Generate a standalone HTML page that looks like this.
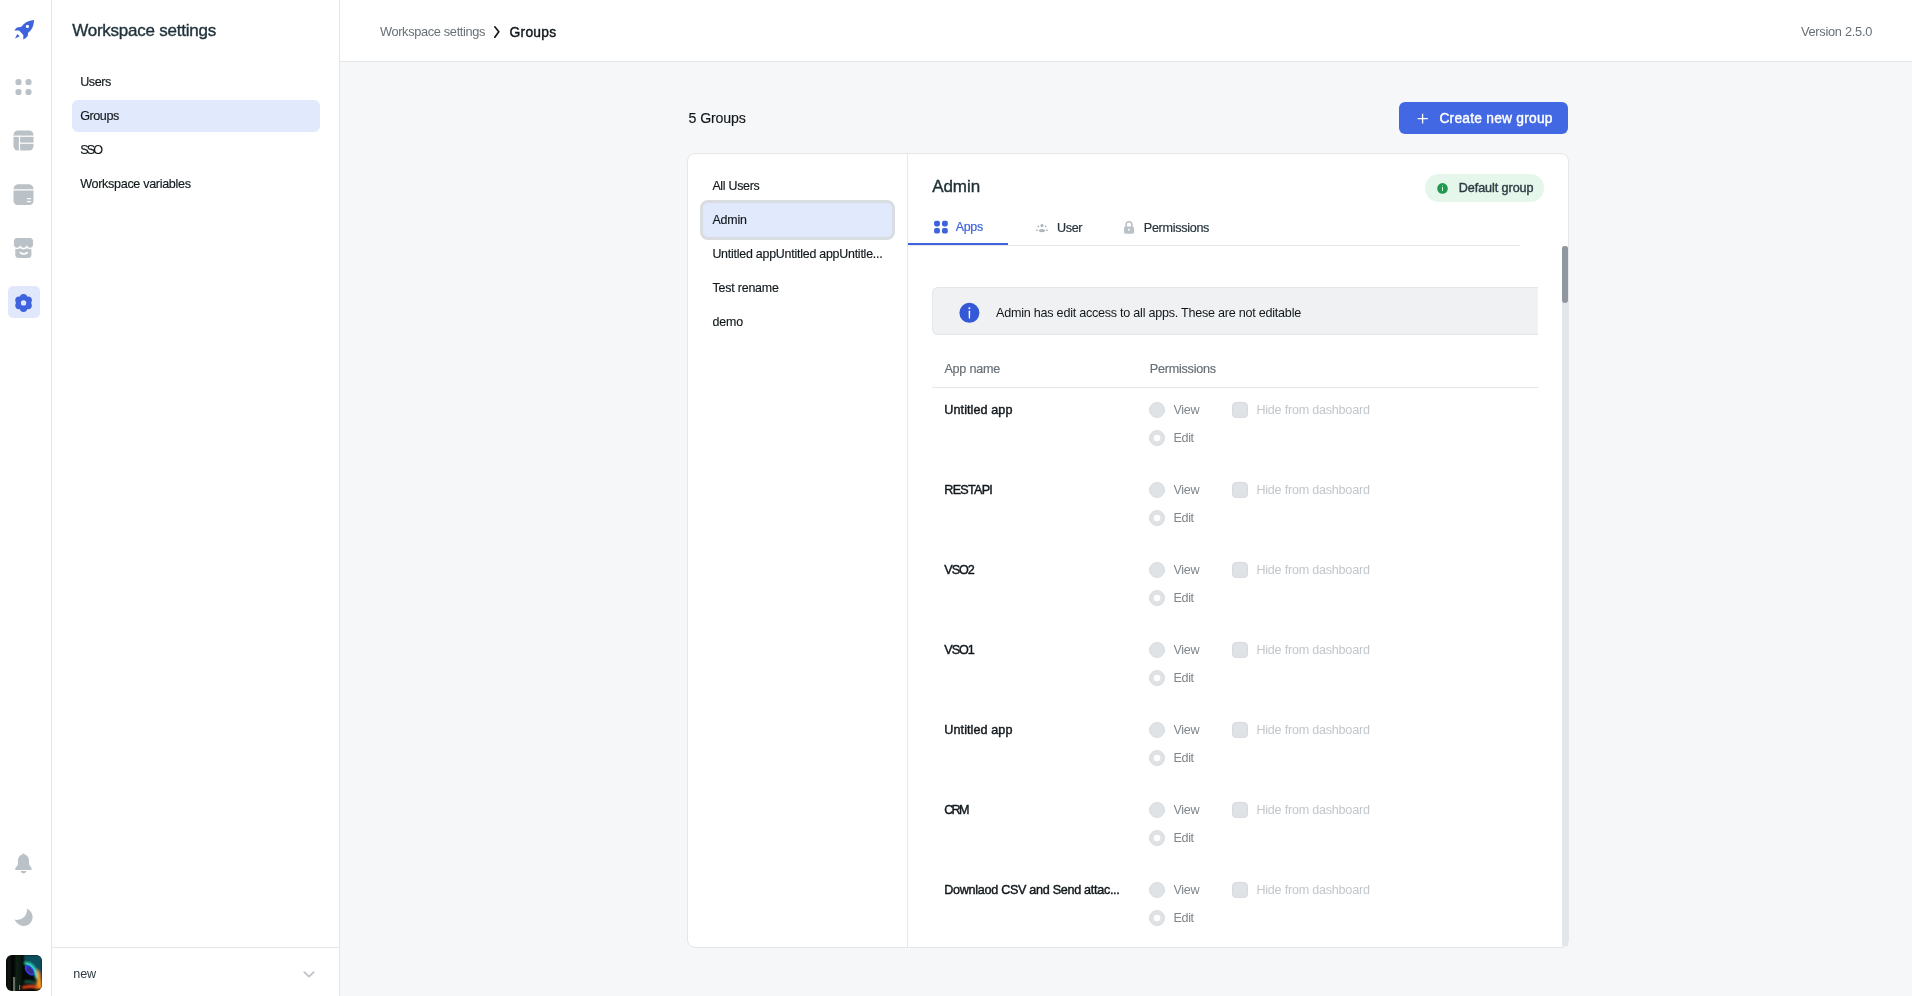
<!DOCTYPE html>
<html><head><meta charset="utf-8">
<style>
*{box-sizing:border-box;margin:0;padding:0}
html,body{width:1912px;height:996px;overflow:hidden;background:#f6f7f9;font-family:"Liberation Sans",sans-serif;color:#11181c}
.a{position:absolute}
#ov{position:absolute;left:0;top:0;width:1912px;height:996px;font-family:"Liberation Sans",sans-serif;will-change:transform}
</style></head><body>
<!-- rail -->
<div class="a" style="left:0;top:0;width:51px;height:996px;background:#fff"></div>
<div class="a" style="left:51px;top:0;width:1px;height:996px;background:#e4e7ea"></div>
<!-- side -->
<div class="a" style="left:52px;top:0;width:287px;height:996px;background:#fff"></div>
<div class="a" style="left:339px;top:0;width:1px;height:996px;background:#e4e7ea"></div>
<div class="a" style="left:52px;top:947px;width:287px;height:1px;background:#e4e7ea"></div>
<div class="a" style="left:72px;top:100px;width:248px;height:32px;background:#e1e9fc;border-radius:6px"></div>
<!-- header -->
<div class="a" style="left:340px;top:0;width:1572px;height:61px;background:#fff"></div>
<div class="a" style="left:340px;top:61px;width:1572px;height:1px;background:#e4e7ea"></div>
<!-- button -->
<div class="a" style="left:1399px;top:102px;width:169px;height:32px;background:#4368e3;border-radius:6px"></div>
<!-- card -->
<div class="a" style="left:687px;top:153px;width:882px;height:795px;background:#fff;border:1px solid #e4e7ea;border-radius:8px"></div>
<div class="a" style="left:907px;top:154px;width:1px;height:793px;background:#e6e8eb"></div>
<!-- selected group -->
<div class="a" style="left:700px;top:200px;width:195px;height:40px;border:3.5px solid #d9dde1;background:#e1e9fc;border-radius:8px"></div>
<!-- default group pill -->
<div class="a" style="left:1425px;top:174px;width:119px;height:28px;background:#e5f6ea;border-radius:14px"></div>
<!-- tabs -->
<div class="a" style="left:908px;top:245px;width:612px;height:1px;background:#e4e7ea"></div>
<div class="a" style="left:908px;top:243px;width:100px;height:2px;background:#3e63dd"></div>
<!-- banner -->
<div class="a" style="left:932px;top:287px;width:606px;height:48px;background:#f0f1f3;border:1px solid #e4e7ea;border-radius:6px 0 0 6px;border-right:none"></div>
<!-- table header line -->
<div class="a" style="left:932px;top:387px;width:606px;height:1px;background:#e4e7ea"></div>
<!-- scrollbar -->
<div class="a" style="left:1562px;top:246px;width:6px;height:700px;background:#e4e7ea"></div>
<div class="a" style="left:1562px;top:246px;width:6px;height:57px;background:#8f969d;border-radius:3px"></div>
<!-- avatar -->
<svg class="a" style="left:6px;top:955px" width="36" height="36" viewBox="0 0 36 36">
<defs><clipPath id="avc"><rect width="36" height="36" rx="6"/></clipPath>
<filter id="bl" x="-20%" y="-20%" width="140%" height="140%"><feGaussianBlur stdDeviation="0.9"/></filter>
<filter id="bl2" x="-20%" y="-20%" width="140%" height="140%"><feGaussianBlur stdDeviation="0.5"/></filter></defs>
<g clip-path="url(#avc)">
<rect width="36" height="36" fill="#060807"/>
<g filter="url(#bl)">
<rect x="10" y="0" width="2" height="36" fill="#1c3a26" opacity="0.8"/>
<rect x="13.5" y="0" width="1.5" height="30" fill="#163a22" opacity="0.7"/>
<rect x="2" y="0" width="2" height="36" fill="#1a221c" opacity="0.8"/>
<path d="M18,0 L36,0 L36,22 C33,18 30,14 27,10 C24,7 21,5 18,6 Z" fill="#0f5668" opacity="0.9"/>
<path d="M18,7 C23,6 29,10 31,17 C32,21 31,24 30,25 C29,20 26,13 18,9 Z" fill="#2fe0c8"/>
<path d="M30,14 C34,16 36,22 36,34 L29,34 C31,28 32,22 30,14 Z" fill="#f09a20"/>
<path d="M16,31.5 C21,30 27,29.5 32,31 L33,33.5 C27,32.5 21,33 16,34 Z" fill="#e84a1a"/>
<path d="M18,26 C22,25 26,26 30,27 L29,29 C25,28 21,27.5 18,28 Z" fill="#1a8a6a" opacity="0.8"/>
</g>
<g filter="url(#bl2)">
<ellipse cx="23.5" cy="15.3" rx="6.2" ry="3.6" transform="rotate(50 23.5 15.3)" fill="#2a40e8"/>
<ellipse cx="23.7" cy="15.3" rx="4.3" ry="2.2" transform="rotate(50 23.7 15.3)" fill="#3a2a8a"/>
<rect x="7" y="22" width="2.2" height="14" fill="#a8aca0" opacity="0.6"/>
<rect x="13" y="30" width="1.2" height="5" fill="#d0e0e0" opacity="0.5"/>
</g>
</g>
</svg>
<svg class="a" style="left:0;top:0" width="1912" height="996" viewBox="0 0 1912 996">
<!-- rocket -->
<path fill="#3e63dd" fill-rule="evenodd" d="M34,20.1 C30.2,20.3 26.4,21.8 23.6,24.3 L21,26.9 C19.4,26.9 17.8,27.1 16.7,27.7 C15.8,28.3 15,29.3 14.4,30.5 L19.1,30.6 L23.3,34.9 L23.3,39.4 C24.6,38.9 26.2,37.8 27.2,36.7 C27.9,35.7 28.1,34.2 28,32.9 L30.8,30.2 C33,27.4 34,24 34,20.1 Z M27.4,24.9 A1.5,1.5 0 1 0 27.41,24.9 Z"/>
<circle cx="27.4" cy="26.4" r="1.45" fill="#fff"/>
<path fill="#3e63dd" d="M15.1,38.6 L17.3,34 L19.7,36.3 Z"/>
<!-- apps dots -->
<g fill="#bac1c7"><rect x="15.5" y="79" width="6" height="6" rx="2.6"/><rect x="25.5" y="79" width="6" height="6" rx="2.6"/><rect x="15.5" y="89" width="6" height="6" rx="2.6"/><rect x="25.5" y="89" width="6" height="6" rx="2.6"/></g>
<!-- table -->
<rect x="13.5" y="130.5" width="20" height="20" rx="4.5" fill="#bac1c7"/>
<rect x="13" y="135.6" width="21" height="1.2" fill="#fff"/>
<rect x="18.9" y="135.6" width="1.2" height="16" fill="#fff"/>
<rect x="18.9" y="142.6" width="15" height="1.2" fill="#fff"/>
<!-- database -->
<path fill="#bac1c7" d="M13.5,189.3 C13.5,186.5 15.5,184.3 18.5,184.3 L28.5,184.3 C31.5,184.3 33.5,186.5 33.5,189.3 Z"/>
<path fill="#bac1c7" d="M13.5,190.5 L33.5,190.5 L33.5,201 C33.5,203.2 31.7,205 29.5,205 L17.5,205 C15.3,205 13.5,203.2 13.5,201 Z"/>
<rect x="27" y="198" width="4" height="1.2" fill="#fff"/>
<rect x="27" y="201" width="4" height="1.2" fill="#fff"/>
<!-- marketplace -->
<path fill="#bac1c7" d="M17,237.9 L30,237.9 C31.8,237.9 33.1,239.3 33.1,241 L33.1,244.6 C33.1,246.5 31.8,247.8 30.2,247.8 C28.6,247.8 27.1,246.6 26.8,245 C26.5,246.6 25.1,247.8 23.5,247.8 C21.9,247.8 20.5,246.6 20.2,245 C19.9,246.6 18.4,247.8 16.8,247.8 C15.2,247.8 13.9,246.5 13.9,244.6 L13.9,241 C13.9,239.3 15.2,237.9 17,237.9 Z"/>
<path fill="#bac1c7" d="M15.3,249 C16.2,249.2 17.8,249.3 18.7,248.8 C19.5,248.4 20.1,248.3 20.3,248.3 C21,249.1 22.3,249.4 23.5,249.4 C24.7,249.4 26,249.1 26.7,248.3 C27.1,248.4 27.6,248.5 28.3,248.8 C29.2,249.3 30.6,249.2 31.4,249 L31.4,254.9 C31.4,256.6 30,257.9 28.3,257.9 L18.4,257.9 C16.7,257.9 15.3,256.6 15.3,254.9 Z"/>
<path fill="none" stroke="#fff" stroke-width="1.8" stroke-linecap="round" d="M20.4,252.6 C22.5,254.3 25,254.3 27.2,252.6"/>
<!-- gear box -->
<rect x="8" y="286" width="32" height="32" rx="5" fill="#e1e8fb"/>
<g transform="translate(23.55,302.9)" fill="#3e63dd"><circle r="6.2"/><circle cx="0.00" cy="5.30" r="3.7"/><circle cx="-4.59" cy="2.65" r="3.7"/><circle cx="-4.59" cy="-2.65" r="3.7"/><circle cx="-0.00" cy="-5.30" r="3.7"/><circle cx="4.59" cy="-2.65" r="3.7"/><circle cx="4.59" cy="2.65" r="3.7"/><circle r="2.7" fill="#e1e8fb"/></g>
<!-- bell -->
<path fill="#bac1c7" d="M23.5,853.5 C24.2,853.5 24.6,854 24.7,854.6 C27.4,855.3 29,857.8 29,860.6 L29,864.5 L31.6,868.2 L31.6,869.9 L15.3,869.9 L15.3,868.2 L17.9,864.5 L17.9,860.6 C17.9,857.8 19.6,855.3 22.3,854.6 C22.4,854 22.8,853.5 23.5,853.5 Z"/>
<path fill="#bac1c7" d="M20.6,871.1 L26.4,871.1 C26,872.6 24.9,873.6 23.5,873.6 C22.1,873.6 21,872.6 20.6,871.1 Z"/>
<!-- moon -->
<path fill="#bac1c7" d="M26.4,908.8 C30,909.8 32.6,913.1 32.6,917 C32.6,921.9 28.7,926 23.8,926 C19.6,926 16.2,923.2 14.5,919.6 C15.4,919.8 16.3,919.9 17.2,919.9 C22.6,919.9 27,915.5 27,910.1 C27,909.7 26.8,909.2 26.4,908.8 Z"/>
<!-- breadcrumb chevron -->
<path fill="none" stroke="#11181c" stroke-width="1.7" stroke-linecap="round" stroke-linejoin="round" d="M494.8,26.8 L498.8,31.8 L494.8,37.2"/>
<!-- bottom chevron -->
<path fill="none" stroke="#c2c6ca" stroke-width="1.9" stroke-linecap="round" stroke-linejoin="round" d="M304.4,972.2 L309,976.6 L313.6,972.2"/>
<!-- plus -->
<path stroke="#fff" stroke-width="1.3" d="M1422.6,113.8 L1422.6,123.4 M1417.6,118.6 L1427.8,118.6"/>
<!-- default group icon -->
<circle cx="1442.5" cy="188.4" r="5.3" fill="#1f9a4e"/>
<rect x="1442.05" y="187" width="0.9" height="4" fill="#fff"/>
<rect x="1442.05" y="185.3" width="0.9" height="0.9" fill="#fff" opacity="0.7"/>
<!-- apps tab icon -->
<g fill="#3e63dd"><rect x="934.1" y="220.8" width="5.8" height="5.6" rx="1.8"/><rect x="942" y="220.8" width="5.8" height="5.6" rx="1.8"/><rect x="934.1" y="228" width="5.8" height="5.6" rx="1.8"/><rect x="942" y="228" width="5.8" height="5.6" rx="1.8"/></g>
<!-- user tab icon -->
<g fill="#aeb5bb">
<circle cx="1042" cy="225.6" r="1.6"/><circle cx="1038.3" cy="226.4" r="0.9"/><circle cx="1045.7" cy="226.4" r="0.9"/>
<ellipse cx="1042" cy="230.6" rx="3" ry="1.6"/><ellipse cx="1037" cy="230.2" rx="1.2" ry="0.8"/><ellipse cx="1047" cy="230.2" rx="1.2" ry="0.8"/>
</g>
<!-- lock -->
<path fill="none" stroke="#bac1c7" stroke-width="1.6" d="M1126.1,227.4 L1126.1,224.8 C1126.1,223 1127.3,221.8 1129,221.8 C1130.7,221.8 1131.9,223 1131.9,224.8 L1131.9,227.4"/>
<rect x="1124" y="226.6" width="10" height="7.1" rx="1.6" fill="#bac1c7"/>
<circle cx="1128.9" cy="229.8" r="1" fill="#fff"/>
<!-- banner info icon -->
<circle cx="969.4" cy="312.85" r="10" fill="#3558d6"/>
<path d="M968.6,310.8 L970.2,310.8 L970.0,318.6 L968.8,318.6 Z" fill="#fff"/>
<circle cx="969.4" cy="308.2" r="0.95" fill="#fff"/>
<circle cx="1157" cy="410" r="7.5" fill="#dfe3e6" stroke="#d7dbdf" stroke-width="1"/>
<circle cx="1157" cy="438" r="7.5" fill="#dfe3e6" stroke="#d7dbdf" stroke-width="1"/>
<circle cx="1157" cy="438" r="3.3" fill="#fff"/>
<rect x="1232.5" y="402.5" width="15" height="15" rx="3.5" fill="#dfe3e6" stroke="#d7dbdf" stroke-width="1"/>
<circle cx="1157" cy="490" r="7.5" fill="#dfe3e6" stroke="#d7dbdf" stroke-width="1"/>
<circle cx="1157" cy="518" r="7.5" fill="#dfe3e6" stroke="#d7dbdf" stroke-width="1"/>
<circle cx="1157" cy="518" r="3.3" fill="#fff"/>
<rect x="1232.5" y="482.5" width="15" height="15" rx="3.5" fill="#dfe3e6" stroke="#d7dbdf" stroke-width="1"/>
<circle cx="1157" cy="570" r="7.5" fill="#dfe3e6" stroke="#d7dbdf" stroke-width="1"/>
<circle cx="1157" cy="598" r="7.5" fill="#dfe3e6" stroke="#d7dbdf" stroke-width="1"/>
<circle cx="1157" cy="598" r="3.3" fill="#fff"/>
<rect x="1232.5" y="562.5" width="15" height="15" rx="3.5" fill="#dfe3e6" stroke="#d7dbdf" stroke-width="1"/>
<circle cx="1157" cy="650" r="7.5" fill="#dfe3e6" stroke="#d7dbdf" stroke-width="1"/>
<circle cx="1157" cy="678" r="7.5" fill="#dfe3e6" stroke="#d7dbdf" stroke-width="1"/>
<circle cx="1157" cy="678" r="3.3" fill="#fff"/>
<rect x="1232.5" y="642.5" width="15" height="15" rx="3.5" fill="#dfe3e6" stroke="#d7dbdf" stroke-width="1"/>
<circle cx="1157" cy="730" r="7.5" fill="#dfe3e6" stroke="#d7dbdf" stroke-width="1"/>
<circle cx="1157" cy="758" r="7.5" fill="#dfe3e6" stroke="#d7dbdf" stroke-width="1"/>
<circle cx="1157" cy="758" r="3.3" fill="#fff"/>
<rect x="1232.5" y="722.5" width="15" height="15" rx="3.5" fill="#dfe3e6" stroke="#d7dbdf" stroke-width="1"/>
<circle cx="1157" cy="810" r="7.5" fill="#dfe3e6" stroke="#d7dbdf" stroke-width="1"/>
<circle cx="1157" cy="838" r="7.5" fill="#dfe3e6" stroke="#d7dbdf" stroke-width="1"/>
<circle cx="1157" cy="838" r="3.3" fill="#fff"/>
<rect x="1232.5" y="802.5" width="15" height="15" rx="3.5" fill="#dfe3e6" stroke="#d7dbdf" stroke-width="1"/>
<circle cx="1157" cy="890" r="7.5" fill="#dfe3e6" stroke="#d7dbdf" stroke-width="1"/>
<circle cx="1157" cy="918" r="7.5" fill="#dfe3e6" stroke="#d7dbdf" stroke-width="1"/>
<circle cx="1157" cy="918" r="3.3" fill="#fff"/>
<rect x="1232.5" y="882.5" width="15" height="15" rx="3.5" fill="#dfe3e6" stroke="#d7dbdf" stroke-width="1"/>
</svg>

<svg id="ov" width="1912" height="996" viewBox="0 0 1912 996">
<text x="72.2" y="35.9" font-size="17" stroke="#1f313a" stroke-width="0.38" fill="#1f313a" textLength="144.0" lengthAdjust="spacing">Workspace settings</text>
<text x="80.2" y="86.0" font-size="12.6" stroke="#11181c" stroke-width="0.15" fill="#11181c" textLength="31.1" lengthAdjust="spacing">Users</text>
<text x="80.2" y="120.0" font-size="12.6" stroke="#11181c" stroke-width="0.15" fill="#11181c" textLength="39.1" lengthAdjust="spacing">Groups</text>
<text x="80.2" y="153.9" font-size="12.6" stroke="#11181c" stroke-width="0.15" fill="#11181c" textLength="22.8" lengthAdjust="spacing">SSO</text>
<text x="80.2" y="187.7" font-size="12.6" stroke="#11181c" stroke-width="0.15" fill="#11181c" textLength="110.8" lengthAdjust="spacing">Workspace variables</text>
<text x="379.9" y="35.9" font-size="12.8" fill="#687076" textLength="105.6" lengthAdjust="spacing">Workspace settings</text>
<text x="509.6" y="36.8" font-size="13.8" stroke="#11181c" stroke-width="0.42" fill="#11181c" textLength="46.5" lengthAdjust="spacing">Groups</text>
<text x="1800.9" y="36.0" font-size="12.8" fill="#687076" textLength="71.4" lengthAdjust="spacing">Version 2.5.0</text>
<text x="688.6" y="123.0" font-size="14.2" stroke="#11181c" stroke-width="0.15" fill="#11181c" textLength="57.3" lengthAdjust="spacing">5 Groups</text>
<text x="1439.4" y="122.8" font-size="13.8" stroke="#ffffff" stroke-width="0.42" fill="#ffffff" textLength="113.1" lengthAdjust="spacing">Create new group</text>
<text x="1458.8" y="191.9" font-size="12.6" stroke="#2b3b43" stroke-width="0.38" fill="#2b3b43" textLength="74.7" lengthAdjust="spacing">Default group</text>
<text x="712.4" y="190.0" font-size="12.4" stroke="#11181c" stroke-width="0.15" fill="#11181c" textLength="47.3" lengthAdjust="spacing">All Users</text>
<text x="712.4" y="223.8" font-size="12.4" stroke="#11181c" stroke-width="0.15" fill="#11181c" textLength="34.6" lengthAdjust="spacing">Admin</text>
<text x="712.4" y="257.9" font-size="12.4" stroke="#11181c" stroke-width="0.15" fill="#11181c" textLength="170.3" lengthAdjust="spacing">Untitled appUntitled appUntitle...</text>
<text x="712.4" y="292.0" font-size="12.4" stroke="#11181c" stroke-width="0.15" fill="#11181c" textLength="66.5" lengthAdjust="spacing">Test rename</text>
<text x="712.4" y="326.0" font-size="12.4" stroke="#11181c" stroke-width="0.15" fill="#11181c" textLength="30.8" lengthAdjust="spacing">demo</text>
<text x="932.2" y="192.1" font-size="17" stroke="#1f2f37" stroke-width="0.38" fill="#1f2f37" textLength="47.9" lengthAdjust="spacing">Admin</text>
<text x="955.8" y="230.7" font-size="12.4" stroke="#3e63dd" stroke-width="0.2" fill="#3e63dd" textLength="27.3" lengthAdjust="spacing">Apps</text>
<text x="1057.0" y="232.1" font-size="12.6" stroke="#26343c" stroke-width="0.2" fill="#26343c" textLength="25.5" lengthAdjust="spacing">User</text>
<text x="1143.8" y="231.8" font-size="12.6" stroke="#26343c" stroke-width="0.2" fill="#26343c" textLength="65.6" lengthAdjust="spacing">Permissions</text>
<text x="996.1" y="317.2" font-size="12.6" fill="#11181c" textLength="305.1" lengthAdjust="spacing">Admin has edit access to all apps. These are not editable</text>
<text x="944.4" y="373.0" font-size="12.6" stroke="#687076" stroke-width="0.2" fill="#687076" textLength="55.9" lengthAdjust="spacing">App name</text>
<text x="1149.7" y="373.0" font-size="12.6" stroke="#687076" stroke-width="0.2" fill="#687076" textLength="66.4" lengthAdjust="spacing">Permissions</text>
<text x="73.2" y="978.3" font-size="12.6" fill="#2e3b43" textLength="23.0" lengthAdjust="spacing">new</text>
<text x="944.3" y="413.8" font-size="12.6" stroke="#11181c" stroke-width="0.42" fill="#11181c" textLength="68.1" lengthAdjust="spacing">Untitled app</text>
<text x="1173.5" y="413.8" font-size="12.6" fill="#7e868c" textLength="26.1" lengthAdjust="spacing">View</text>
<text x="1173.5" y="441.6" font-size="12.6" fill="#7e868c" textLength="20.6" lengthAdjust="spacing">Edit</text>
<text x="1256.4" y="413.8" font-size="12.6" fill="#c1c8cd" textLength="113.5" lengthAdjust="spacing">Hide from dashboard</text>
<text x="944.3" y="493.8" font-size="12.6" stroke="#11181c" stroke-width="0.42" fill="#11181c" textLength="48.5" lengthAdjust="spacing">RESTAPI</text>
<text x="1173.5" y="493.8" font-size="12.6" fill="#7e868c" textLength="26.1" lengthAdjust="spacing">View</text>
<text x="1173.5" y="521.6" font-size="12.6" fill="#7e868c" textLength="20.6" lengthAdjust="spacing">Edit</text>
<text x="1256.4" y="493.8" font-size="12.6" fill="#c1c8cd" textLength="113.5" lengthAdjust="spacing">Hide from dashboard</text>
<text x="944.3" y="573.8" font-size="12.6" stroke="#11181c" stroke-width="0.42" fill="#11181c" textLength="30.4" lengthAdjust="spacing">VSO2</text>
<text x="1173.5" y="573.8" font-size="12.6" fill="#7e868c" textLength="26.1" lengthAdjust="spacing">View</text>
<text x="1173.5" y="601.6" font-size="12.6" fill="#7e868c" textLength="20.6" lengthAdjust="spacing">Edit</text>
<text x="1256.4" y="573.8" font-size="12.6" fill="#c1c8cd" textLength="113.5" lengthAdjust="spacing">Hide from dashboard</text>
<text x="944.3" y="653.8" font-size="12.6" stroke="#11181c" stroke-width="0.42" fill="#11181c" textLength="30.4" lengthAdjust="spacing">VSO1</text>
<text x="1173.5" y="653.8" font-size="12.6" fill="#7e868c" textLength="26.1" lengthAdjust="spacing">View</text>
<text x="1173.5" y="681.6" font-size="12.6" fill="#7e868c" textLength="20.6" lengthAdjust="spacing">Edit</text>
<text x="1256.4" y="653.8" font-size="12.6" fill="#c1c8cd" textLength="113.5" lengthAdjust="spacing">Hide from dashboard</text>
<text x="944.3" y="733.8" font-size="12.6" stroke="#11181c" stroke-width="0.42" fill="#11181c" textLength="68.1" lengthAdjust="spacing">Untitled app</text>
<text x="1173.5" y="733.8" font-size="12.6" fill="#7e868c" textLength="26.1" lengthAdjust="spacing">View</text>
<text x="1173.5" y="761.6" font-size="12.6" fill="#7e868c" textLength="20.6" lengthAdjust="spacing">Edit</text>
<text x="1256.4" y="733.8" font-size="12.6" fill="#c1c8cd" textLength="113.5" lengthAdjust="spacing">Hide from dashboard</text>
<text x="944.3" y="813.8" font-size="12.6" stroke="#11181c" stroke-width="0.42" fill="#11181c" textLength="25.1" lengthAdjust="spacing">CRM</text>
<text x="1173.5" y="813.8" font-size="12.6" fill="#7e868c" textLength="26.1" lengthAdjust="spacing">View</text>
<text x="1173.5" y="841.6" font-size="12.6" fill="#7e868c" textLength="20.6" lengthAdjust="spacing">Edit</text>
<text x="1256.4" y="813.8" font-size="12.6" fill="#c1c8cd" textLength="113.5" lengthAdjust="spacing">Hide from dashboard</text>
<text x="944.3" y="893.8" font-size="12.6" stroke="#11181c" stroke-width="0.42" fill="#11181c" textLength="175.5" lengthAdjust="spacing">Downlaod CSV and Send attac...</text>
<text x="1173.5" y="893.8" font-size="12.6" fill="#7e868c" textLength="26.1" lengthAdjust="spacing">View</text>
<text x="1173.5" y="921.6" font-size="12.6" fill="#7e868c" textLength="20.6" lengthAdjust="spacing">Edit</text>
<text x="1256.4" y="893.8" font-size="12.6" fill="#c1c8cd" textLength="113.5" lengthAdjust="spacing">Hide from dashboard</text>
</svg>
</body></html>
